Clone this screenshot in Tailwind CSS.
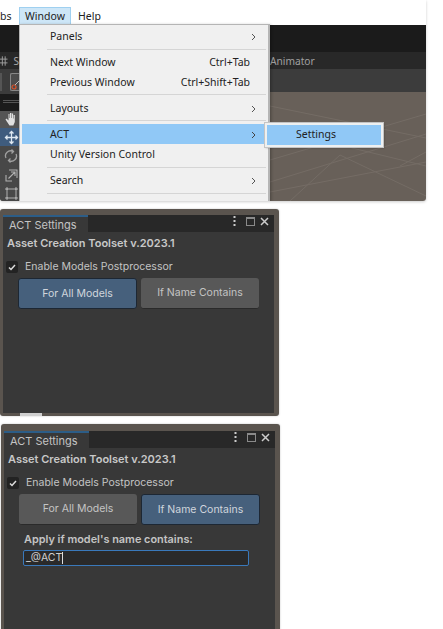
<!doctype html>
<html><head><meta charset="utf-8"><script src="https://cdn.jsdelivr.net/npm/@tailwindcss/browser@4"></script></head>
<body class="bg-white">
<div class="relative w-[443px] h-[629px] overflow-hidden bg-white font-['Noto_Sans','Liberation_Sans',sans-serif]">

<!-- Editor screenshot -->
<div class="relative w-[426px] h-[201px] rounded-b-[3px] shadow-[0_1px_3px_rgba(0,0,0,0.2)] bg-white overflow-hidden">
  <div class="h-[25px] flex items-start pt-[7px] text-[10.5px] text-[#222] bg-white">
    <span class="w-[19px] leading-[18px]">bs</span>
    <span class="w-[52px] h-[18px] bg-[#cde6f7] border border-[#9fd0f0] text-center leading-[16px]">Window</span>
    <span class="ml-[7px] leading-[18px]">Help</span>
  </div>
  <div class="absolute left-0 top-[25px] w-[426px] h-[27px] bg-[#1b1b1b]"></div>
  <div class="absolute left-0 top-[52px] w-[426px] h-[17px] bg-[#282828] text-[10.2px] text-[#a0a0a0] leading-[19px] pl-[270px]">Animator</div>
  <div class="absolute left-0 top-[69px] w-[426px] h-[23px] bg-[#3c3c3c]"></div>
  <div class="absolute left-0 top-[92px] w-[426px] h-[109px] bg-[#686059]">
    <svg width="426" height="109" class="absolute inset-0" fill="none" stroke="#746c65" stroke-width="1">
      <path d="M270 14L426 46M270 36L426 74M270 68L426 22M270 90L426 42M340 63L426 104M270 100L426 70M290 109L340 63M400 74L426 60"/>
    </svg>
  </div>
  <!-- left tools -->
  <div class="absolute left-0 top-[52px] w-[19px] h-[149px] flex flex-col text-[#a8a8a8]">
    <div class="h-[17px] text-[10px] leading-[19px] flex"><svg class="mt-[4px]" width="8" height="10" viewBox="0 0 8 10" fill="none" stroke="#a0a0a0"><path d="M2.5 0v10M5.5 0v10M0 3h8M0 7h8"/></svg><span class="ml-[6px]">S</span></div>
    <div class="h-[26px] bg-[#3c3c3c] pt-[4px] flex justify-between">
      <div class="w-[2px] h-[18px] bg-[#555]"></div>
      <div class="w-[9px] h-[18px] border-l border-y border-[#888] bg-[#4c4c4c] rounded-l-[2px] relative"><svg class="absolute left-0 top-[5px]" width="9" height="11" viewBox="0 0 9 11" fill="none"><circle cx="3" cy="8" r="2" stroke="#d9532c" stroke-width="1.2"/><path d="M4 6L9 1" stroke="#bbb"/></svg></div>
    </div>
    <div class="h-[17px] bg-[#1b1b1b] pt-[6px] pl-[3px]"><div class="h-[3px] border-y border-[#555]"></div></div>
    <div class="h-[17px] bg-[#555] flex items-center justify-center pl-[3px]">
      <svg width="13" height="14" viewBox="0 0 13 14" fill="#e0e0e0"><path d="M0.5 7.5l1-1 2 2V2h1v4h.5V1h1.4v5h.5V1.5h1.2V6.500h.5V3h1.2v7l-1.500 3.500H4.500z"/></svg>
    </div>
    <div class="h-[19px] bg-[#3f5c7e] flex items-center justify-center pl-[3px]">
      <svg width="15" height="15" viewBox="0 0 15 15" fill="none" stroke="#dfe8f0" stroke-width="1.3"><path d="M7.500 2v11M2 7.500h11M5.500 3.500l2-2 2 2M5.500 11.500l2 2 2-2M3.500 5.500l-2 2 2 2M11.500 5.500l2 2-2 2"/></svg>
    </div>
    <div class="h-[20px] bg-[#484848] flex items-center justify-center pl-[3px]">
      <svg width="14" height="14" viewBox="0 0 14 14" fill="none" stroke="#a0a0a0" stroke-width="1.3"><path d="M2 9a5 5 0 0 1 7-6.500M12 5a5 5 0 0 1-7 6.500M7.500 0.500l2 2-2 2M6.500 13.500l-2-2 2-2"/></svg>
    </div>
    <div class="h-[20px] bg-[#484848] flex items-center justify-center pl-[3px]">
      <svg width="13" height="13" viewBox="0 0 13 13" fill="none" stroke="#b0b0b0" stroke-width="1.1"><path d="M1 6V12H7M4 1h8v8M3.500 9.500L10 3M6 3h4v4"/></svg>
    </div>
    <div class="h-[16px] bg-[#484848] flex items-start pt-[2px] justify-center pl-[3px]">
      <svg width="13" height="13" viewBox="0 0 13 13" fill="none" stroke="#b0b0b0" stroke-width="1"><rect x="2" y="2" width="9" height="9"/><path d="M0 2h3M2 0v3M10 2h3M11 0v3M0 11h3M2 10v3M10 11h3M11 10v3"/></svg>
    </div>
  </div>

  <!-- Menu -->
  <div class="absolute left-[19px] top-[24px] w-[251px] h-[177px] bg-[#f0f0f0] border-l border-r-2 border-t border-[#b5b5b5] text-[10.5px] text-[#222] shadow-[1px_1px_3px_rgba(0,0,0,.3)]">
    <div class="h-[24px] flex items-center pl-[30px] pr-[12px] justify-between"><span>Panels</span><svg width="5" height="8" viewBox="0 0 5 8" fill="none" stroke="#555"><path d="M1 1l3 3-3 3"/></svg></div>
    <div class="h-px bg-[#d5d5d5] ml-[27px] mr-[2px]"></div>
    <div class="h-[20px] mt-[2px] pt-[2px] flex items-center pl-[30px] pr-[18px] justify-between"><span>Next Window</span><span>Ctrl+Tab</span></div>
    <div class="h-[20px] pt-[2px] flex items-center pl-[30px] pr-[18px] justify-between"><span>Previous Window</span><span>Ctrl+Shift+Tab</span></div>
    <div class="h-px bg-[#d5d5d5] ml-[27px] mr-[2px] mt-[2px]"></div>
    <div class="h-[25px] pt-[2px] flex items-center pl-[30px] pr-[12px] justify-between"><span>Layouts</span><svg width="5" height="8" viewBox="0 0 5 8" fill="none" stroke="#555"><path d="M1 1l3 3-3 3"/></svg></div>
    <div class="h-px bg-[#d5d5d5] ml-[27px] mr-[2px]"></div>
    <div class="h-[20px] mt-[3px] pt-[2px] ml-[2px] bg-[#90c8f6] flex items-center pl-[28px] pr-[12px] justify-between"><span>ACT</span><svg width="5" height="8" viewBox="0 0 5 8" fill="none" stroke="#444"><path d="M1 1l3 3-3 3"/></svg></div>
    <div class="h-[20px] pt-[2px] flex items-center pl-[30px]"><span>Unity Version Control</span></div>
    <div class="h-px bg-[#d5d5d5] ml-[27px] mr-[2px] mt-[3px]"></div>
    <div class="h-[25px] flex items-center pl-[30px] pr-[12px] justify-between"><span>Search</span><svg width="5" height="8" viewBox="0 0 5 8" fill="none" stroke="#555"><path d="M1 1l3 3-3 3"/></svg></div>
    <div class="h-px bg-[#d5d5d5] ml-[27px] mr-[2px]"></div>
  </div>
  <!-- Submenu -->
  <div class="absolute left-[265px] top-[123px] w-[118px] h-[24px] bg-[#90c8f6] border-[2px] border-[#eef0f0] outline outline-[#c4c4c4] text-[10.5px] text-[#222] leading-[18px] pl-[29px] shadow-[1px_1px_2px_rgba(0,0,0,.3)]">Settings</div>
</div>

<!-- First panel -->
<div class="absolute left-0 top-[209px] w-[279px] h-[207px] rounded-[3px] bg-[#5a544e] pt-[6px] pl-[3px] pr-[5px] pb-[3px] shadow-[0_0_2px_rgba(0,0,0,.25)] font-['Inter',sans-serif]">
  <div class="h-full bg-[#383838] relative text-[10.5px] text-[#c4c4c4]">
    <div class="h-[17px] bg-[#282828] flex items-start">
      <div class="w-[85px] h-[18px] bg-[#383838] border-t-2 border-[#2c5d87] pl-[6px] leading-[17px] text-[11px]">ACT Settings</div>
      <div class="ml-auto mr-[5px] mt-[1px] flex items-center">
        <svg width="3" height="10" viewBox="0 0 3 10" fill="#ccc"><rect x="0.500" y="0" width="2" height="2"/><rect x="0.500" y="4" width="2" height="2"/><rect x="0.500" y="8" width="2" height="2"/></svg>
        <svg class="ml-[10px]" width="9" height="9" viewBox="0 0 9 9" fill="none" stroke="#8a8a8a"><rect x=".5" y=".5" width="8" height="8"/><path d="M0 1.500h9"/></svg>
        <svg class="ml-[5px]" width="9" height="9" viewBox="0 0 9 9" fill="none" stroke="#ccc" stroke-width="1.500"><path d="M1 1l7 7M8 1l-7 7"/></svg>
      </div>
    </div>
    <div class="h-[16px] mt-[3px] ml-[4px] font-semibold leading-[16px] text-[11px] text-[#c8c8c8]">Asset Creation Toolset v.2023.1</div>
    <div class="flex items-center mt-[9px] ml-[3px] h-[14px] gap-[7px]">
      <span class="w-[12px] h-[12px] rounded-[2px] bg-[#232323] flex items-center justify-center"><svg width="8" height="7" viewBox="0 0 8 7" fill="none" stroke="#ddd" stroke-width="1.500"><path d="M1 3.500l2 2 4-4.500"/></svg></span>
      <span>Enable Models Postprocessor</span>
    </div>
    <div class="flex gap-[4px] ml-[15px] mt-[4px]">
      <div class="w-[119px] h-[31px] rounded-[3px] bg-[#46607c] border border-[#1d2733] flex items-center justify-center text-[#d0d6dc]">For All Models</div>
      <div class="w-[118px] h-[31px] rounded-[3px] bg-[#585858] border-b border-[#2a2a2a] flex items-center justify-center">If Name Contains</div>
    </div>
    <div class="absolute -bottom-[3px] left-[17px] w-[22px] h-[3px] bg-[#cfcfcf]"></div>
  </div>
</div>

<!-- Second panel -->
<div class="absolute left-[1px] top-[424px] w-[279px] h-[216px] rounded-[3px] bg-[#5a544e] pt-[7px] pl-[3px] pr-[5px] shadow-[0_0_2px_rgba(0,0,0,.25)] font-['Inter',sans-serif]">
  <div class="h-full bg-[#383838] relative text-[10.5px] text-[#c4c4c4]">
    <div class="h-[17px] bg-[#282828] flex items-start">
      <div class="w-[85px] h-[18px] bg-[#383838] border-t-2 border-[#2c5d87] pl-[6px] leading-[17px] text-[11px]">ACT Settings</div>
      <div class="ml-auto mr-[5px] mt-[1px] flex items-center">
        <svg width="3" height="10" viewBox="0 0 3 10" fill="#ccc"><rect x="0.500" y="0" width="2" height="2"/><rect x="0.500" y="4" width="2" height="2"/><rect x="0.500" y="8" width="2" height="2"/></svg>
        <svg class="ml-[10px]" width="9" height="9" viewBox="0 0 9 9" fill="none" stroke="#8a8a8a"><rect x=".5" y=".5" width="8" height="8"/><path d="M0 1.500h9"/></svg>
        <svg class="ml-[5px]" width="9" height="9" viewBox="0 0 9 9" fill="none" stroke="#ccc" stroke-width="1.500"><path d="M1 1l7 7M8 1l-7 7"/></svg>
      </div>
    </div>
    <div class="h-[16px] mt-[3px] ml-[4px] font-semibold leading-[16px] text-[11px] text-[#c8c8c8]">Asset Creation Toolset v.2023.1</div>
    <div class="flex items-center mt-[9px] ml-[3px] h-[14px] gap-[7px]">
      <span class="w-[12px] h-[12px] rounded-[2px] bg-[#232323] flex items-center justify-center"><svg width="8" height="7" viewBox="0 0 8 7" fill="none" stroke="#ddd" stroke-width="1.500"><path d="M1 3.500l2 2 4-4.500"/></svg></span>
      <span>Enable Models Postprocessor</span>
    </div>
    <div class="flex gap-[4px] ml-[15px] mt-[4px]">
      <div class="w-[118px] h-[31px] rounded-[3px] bg-[#585858] border-b border-[#2a2a2a] flex items-center justify-center">For All Models</div>
      <div class="w-[119px] h-[31px] rounded-[3px] bg-[#46607c] border border-[#1d2733] flex items-center justify-center text-[#d0d6dc]">If Name Contains</div>
    </div>
    <div class="ml-[20px] mt-[6px] h-[16px] font-semibold leading-[16px] text-[10.9px]">Apply if model's name contains:</div>
    <div class="ml-[19px] mt-[3px] w-[226px] h-[16px] rounded-[2px] bg-[#2a2a2a] border border-[#3a79bb] pl-[2px] text-[#d0d0d0] flex items-center">_@ACT<span class="w-px h-[12px] bg-[#ddd]"></span></div>
    <div class="absolute top-[198px] left-[17px] w-[17px] h-[3px] bg-[#cfcfcf]"></div>
  </div>
</div>
</div>
</body></html>
